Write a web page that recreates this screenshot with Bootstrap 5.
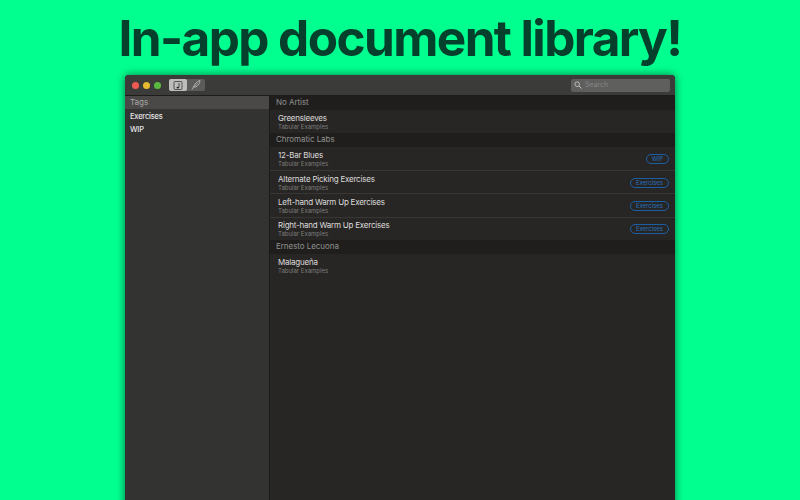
<!DOCTYPE html>
<html lang="en">
<head>
<meta charset="UTF-8">
<title>In-app document library</title>
<link href="https://cdn.jsdelivr.net/npm/bootstrap@5.3.0/dist/css/bootstrap.min.css" rel="stylesheet">
<style>
    html, body { height: 100%; }
    body { background: #00ff8f; overflow: hidden; font-family: Inter, "Liberation Sans", sans-serif; }
    .promo-title { font-size: 49.5px; font-weight: 700; line-height: 62px; letter-spacing: -1.6px; color: #04402c; padding-top: 7px; height: 75px; margin: 0; }
    .app-window { width: 550px; height: 440px; background: #282625; box-shadow: 0 0 8px rgba(0,0,0,.55); border-radius: 4px 4px 0 0; overflow: hidden; }
    .title-bar { height: 21px; background: #3b3b3a; border-bottom: 1px solid #1d1d1c; padding: 0 5px 0 7px; }
    .light { width: 7px; height: 7px; border-radius: 50%; }
    .seg-group { width: 36px; height: 12px; background: #5b5b5a; border-radius: 2px; }
    .seg-on { width: 18px; background: #bdbdbb; border-radius: 2px; }
    .seg-off { width: 18px; }
    .search-box { width: 99px; height: 13px; background: #5f5f5e; border-radius: 2px; font-size: 7px; color: #868685; padding-left: 3px; gap: 3px; }
    .side-pane { width: 145px; background: #333332; border-right: 1px solid #1b1b1a; }
    .side-head { height: 13px; background: #4a4947; color: #a9a8a6; font-size: 8px; padding-left: 5px; line-height: 13px; }
    .side-list { padding-top: 1px; }
    .side-item { height: 13px; line-height: 13px; font-size: 7.5px; font-weight: 500; letter-spacing: -.2px; color: #e6e6e5; padding-left: 5px; }
    .group-head { height: 13.5px; line-height: 13.5px; background: #1f1e1d; color: #92918f; font-size: 8px; letter-spacing: -.05px; padding-left: 6px; }
    .doc-row { height: 23.6px; padding: 3px 6px 0 8px; }
    .doc-tagged { height: 23.4px; padding-top: 1px; }
    .doc-tagged + .doc-tagged { border-top: 1px solid #383736; }
    .doc-name { font-size: 8px; line-height: 10px; letter-spacing: -.22px; color: #dcdbda; }
    .doc-sub { font-size: 6px; line-height: 8px; color: #7d7c7b; }
    .tag-pill { border: 1px solid #1a5fa5; color: #2370bd; border-radius: 6px; font-size: 6px; line-height: 8px; padding: 0 5px; height: 10px; }
</style>
</head>
<body>

<h1 class="promo-title text-center">In-app document library!</h1>

<div class="app-window mx-auto d-flex flex-column">
    <div class="title-bar d-flex align-items-center flex-shrink-0">
        <div class="d-flex gap-1">
            <span class="light" style="background:#ee5a52"></span>
            <span class="light" style="background:#e5b92f"></span>
            <span class="light" style="background:#5cb93f"></span>
        </div>
        <div class="seg-group d-flex ms-2">
            <div class="seg-on d-flex align-items-center justify-content-center">
                <svg width="10" height="9" viewBox="0 0 10 9"><rect x="1" y=".5" width="8" height="8" rx="1" fill="none" stroke="#3a3a39" stroke-width=".8"/><path d="M6 2v4.5" stroke="#2a2a29" stroke-width=".8"/><ellipse cx="4.8" cy="6.6" rx="1.3" ry=".9" fill="#2a2a29"/></svg>
            </div>
            <div class="seg-off d-flex align-items-center justify-content-center">
                <svg width="10" height="10" viewBox="0 0 10 10"><path d="M1 9.5 3 6c1-2.5 3-4.500 6-5.500-.3 3-1.800 5.500-4.500 6.500L3 7" fill="none" stroke="#c6c6c4" stroke-width=".8"/><path d="M3 7 7 3" stroke="#c6c6c4" stroke-width=".6"/></svg>
            </div>
        </div>
        <div class="search-box d-flex align-items-center ms-auto">
            <svg width="8" height="8" viewBox="0 0 8 8"><circle cx="3.200" cy="3.200" r="2.300" fill="none" stroke="#c4c4c3" stroke-width=".9"/><path d="M5 5l2.500 2.500" stroke="#c4c4c3" stroke-width="1"/></svg>
            <span>Search</span>
        </div>
    </div>
    <div class="d-flex flex-grow-1">
        <div class="side-pane flex-shrink-0">
            <div class="side-head">Tags</div>
            <div class="side-list">
                <div class="side-item">Exercises</div>
                <div class="side-item">WIP</div>
            </div>
        </div>
        <div class="flex-grow-1">
            <div class="group-head">No Artist</div>
            <div class="doc-row">
                <div class="doc-name">Greensleeves</div>
                <div class="doc-sub">Tabular Examples</div>
            </div>
            <div class="group-head">Chromatic Labs</div>
            <div class="doc-row doc-tagged d-flex justify-content-between align-items-center">
                <div><div class="doc-name">12-Bar Blues</div><div class="doc-sub">Tabular Examples</div></div>
                <span class="tag-pill">WIP</span>
            </div>
            <div class="doc-row doc-tagged d-flex justify-content-between align-items-center">
                <div><div class="doc-name">Alternate Picking Exercises</div><div class="doc-sub">Tabular Examples</div></div>
                <span class="tag-pill">Exercises</span>
            </div>
            <div class="doc-row doc-tagged d-flex justify-content-between align-items-center">
                <div><div class="doc-name">Left-hand Warm Up Exercises</div><div class="doc-sub">Tabular Examples</div></div>
                <span class="tag-pill">Exercises</span>
            </div>
            <div class="doc-row doc-tagged d-flex justify-content-between align-items-center">
                <div><div class="doc-name">Right-hand Warm Up Exercises</div><div class="doc-sub">Tabular Examples</div></div>
                <span class="tag-pill">Exercises</span>
            </div>
            <div class="group-head">Ernesto Lecuona</div>
            <div class="doc-row">
                <div class="doc-name">Malagueña</div>
                <div class="doc-sub">Tabular Examples</div>
            </div>
        </div>
    </div>
</div>

<script src="https://cdn.jsdelivr.net/npm/bootstrap@5.3.0/dist/js/bootstrap.bundle.min.js"></script>
</body>
</html>
